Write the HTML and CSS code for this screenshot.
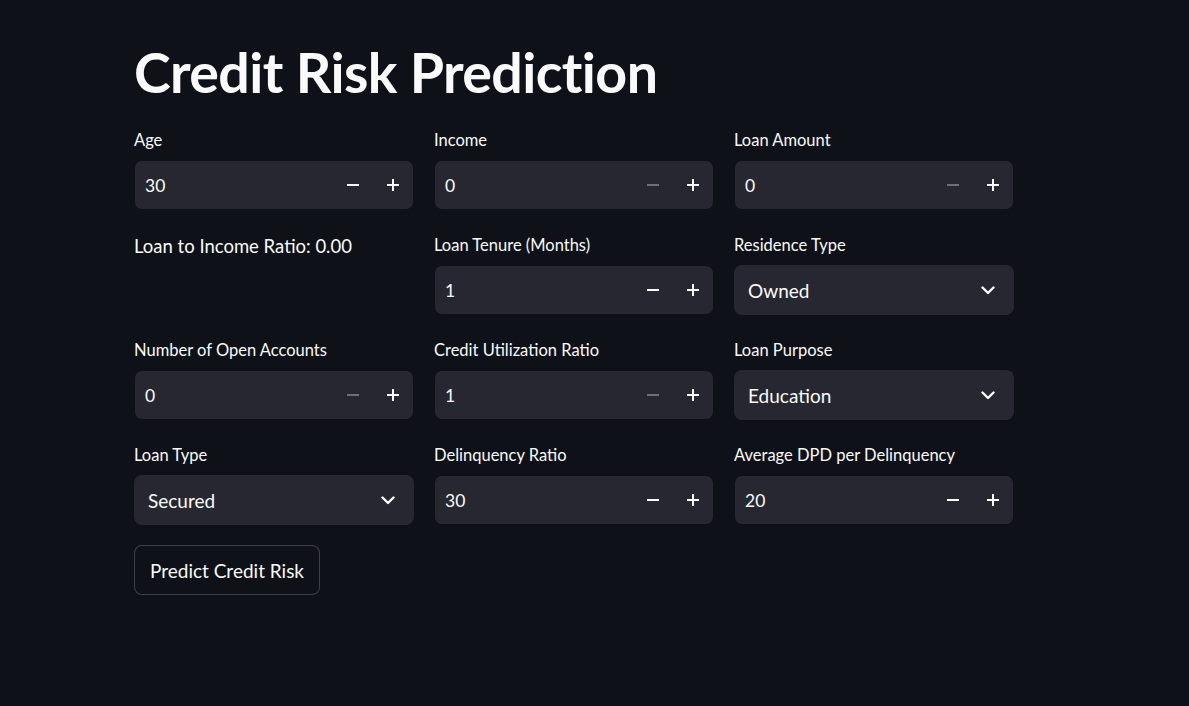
FILE: index.html
```html
<!DOCTYPE html>
<html lang="en">
<head>
<meta charset="utf-8">
<title>Credit Risk Prediction</title>
<link rel="stylesheet" href="styles.css">
</head>
<body>
<main class="main">
  <h1 class="title">Credit Risk Prediction</h1>
  <div class="grid">
    <div class="cell">
      <label class="label">Age</label>
      <div class="num"><span class="val">30</span><span class="step minus"></span><span class="step plus"></span></div>
    </div>
    <div class="cell">
      <label class="label">Income</label>
      <div class="num"><span class="val">0</span><span class="step minus off"></span><span class="step plus"></span></div>
    </div>
    <div class="cell">
      <label class="label">Loan Amount</label>
      <div class="num"><span class="val">0</span><span class="step minus off"></span><span class="step plus"></span></div>
    </div>

    <div class="cell">
      <p class="note">Loan to Income Ratio: 0.00</p>
    </div>
    <div class="cell">
      <label class="label">Loan Tenure (Months)</label>
      <div class="num"><span class="val">1</span><span class="step minus"></span><span class="step plus"></span></div>
    </div>
    <div class="cell">
      <label class="label">Residence Type</label>
      <div class="select"><span class="sval">Owned</span><svg class="chev" width="14" height="9" viewBox="0 0 14 9"><path d="M1.5 1.5 L7 7 L12.5 1.5" fill="none" stroke="#fafafa" stroke-width="2.4" stroke-linecap="round" stroke-linejoin="round"/></svg></div>
    </div>

    <div class="cell">
      <label class="label">Number of Open Accounts</label>
      <div class="num"><span class="val">0</span><span class="step minus off"></span><span class="step plus"></span></div>
    </div>
    <div class="cell">
      <label class="label">Credit Utilization Ratio</label>
      <div class="num"><span class="val">1</span><span class="step minus off"></span><span class="step plus"></span></div>
    </div>
    <div class="cell">
      <label class="label">Loan Purpose</label>
      <div class="select"><span class="sval">Education</span><svg class="chev" width="14" height="9" viewBox="0 0 14 9"><path d="M1.5 1.5 L7 7 L12.5 1.5" fill="none" stroke="#fafafa" stroke-width="2.4" stroke-linecap="round" stroke-linejoin="round"/></svg></div>
    </div>

    <div class="cell">
      <label class="label">Loan Type</label>
      <div class="select"><span class="sval">Secured</span><svg class="chev" width="14" height="9" viewBox="0 0 14 9"><path d="M1.5 1.5 L7 7 L12.5 1.5" fill="none" stroke="#fafafa" stroke-width="2.4" stroke-linecap="round" stroke-linejoin="round"/></svg></div>
    </div>
    <div class="cell">
      <label class="label">Delinquency Ratio</label>
      <div class="num"><span class="val">30</span><span class="step minus"></span><span class="step plus"></span></div>
    </div>
    <div class="cell">
      <label class="label">Average DPD per Delinquency</label>
      <div class="num"><span class="val">20</span><span class="step minus"></span><span class="step plus"></span></div>
    </div>
  </div>
  <button class="btn" type="button">Predict Credit Risk</button>
</main>
</body>
</html>
```

FILE: styles.css
```css
* { box-sizing: border-box; }
html, body {
  margin: 0;
  padding: 0;
  background: #0e1117;
  color: #fafafa;
  font-family: "Lato", "Noto Sans", sans-serif;
}
.main {
  padding: 37px 0 0 134px;
  width: 1189px;
  height: 706px;
}
.title {
  margin: 0 0 24px 0;
  font-size: 55.5px;
  line-height: 70px;
  font-weight: 700;
  letter-spacing: -0.6px;
}
.grid {
  display: grid;
  grid-template-columns: repeat(3, 280px);
  column-gap: 20px;
  row-gap: 26px;
  width: 880px;
}
.cell {
  display: flex;
  flex-direction: column;
}
.label {
  display: block;
  height: 29px;
  font-size: 16.5px;
  line-height: 18px;
}
.note {
  margin: 0;
  font-size: 18.5px;
  line-height: 20px;
}
.num {
  height: 50px;
  border: 1px solid #0e1117;
  display: flex;
  align-items: center;
  background: #262730;
  border-radius: 8px;
  padding-left: 10px;
}
.val {
  flex: 1;
  font-size: 17.5px;
}
.step {
  width: 40px;
  height: 48px;
  position: relative;
}
.step::before, .step::after {
  content: "";
  position: absolute;
  background: #fafafa;
  left: 14px;
  top: 23px;
  width: 12px;
  height: 2px;
}
.minus::after { display: none; }
.plus::after {
  left: 19px;
  top: 18px;
  width: 2px;
  height: 12px;
}
.minus.off::before { background: #6c6d78; }
.select {
  height: 50px;
  background: #262730;
  border-radius: 8px;
  display: flex;
  align-items: center;
  padding: 0 19px 0 14px;
}
.sval {
  flex: 1;
  font-size: 19px;
}
.chev { display: block; }
.btn {
  margin-top: 20px;
  height: 50px;
  padding: 0 15px;
  background: #0e1117;
  border: 1px solid rgba(250, 250, 250, 0.2);
  border-radius: 8px;
  color: #fafafa;
  font-family: inherit;
  font-size: 19px;
}
```
